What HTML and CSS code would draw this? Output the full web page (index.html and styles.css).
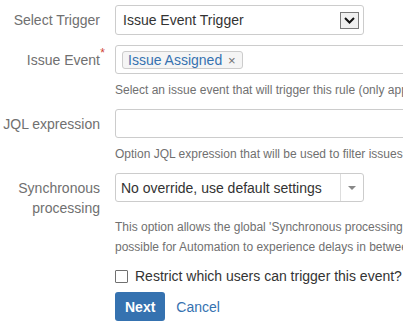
FILE: index.html
```html
<!DOCTYPE html>
<html lang="en">
<head>
  <meta charset="UTF-8">
  <title>Add Trigger</title>
  <link rel="stylesheet" href="styles.css">
</head>
<body>

  <form class="aui">
    <div class="field-group">
      <label>Select Trigger</label>
      <div class="control">
        <div class="select native">
          <span class="value">Issue Event Trigger</span>
          <span class="native-arrow">
            <svg width="11" height="7" viewBox="0 0 11 7"><path d="M1 1 L5.5 5.5 L10 1" fill="none" stroke="#111" stroke-width="2"/></svg>
          </span>
        </div>
      </div>
    </div>

    <div class="field-group">
      <label>Issue Event<span class="required">*</span></label>
      <div class="control">
        <div class="text long tags">
          <span class="tag">Issue Assigned <span class="remove">×</span></span>
        </div>
        <div class="description">Select an issue event that will trigger this rule (only applies to issue events and not to other events)</div>
      </div>
    </div>

    <div class="field-group">
      <label>JQL expression</label>
      <div class="control">
        <div class="text long"></div>
        <div class="description">Option JQL expression that will be used to filter issues before the rule is run</div>
      </div>
    </div>

    <div class="field-group">
      <label>Synchronous processing</label>
      <div class="control">
        <div class="select single">
          <span class="value">No override, use default settings</span>
          <span class="caret"></span>
        </div>
        <div class="description spaced">This option allows the global 'Synchronous processing' setting to be overridden for this rule.<br>possible for Automation to experience delays in between events and rules being processed.</div>
      </div>
    </div>

    <div class="checkbox-row">
      <span class="checkbox"></span>
      <span>Restrict which users can trigger this event?</span>
    </div>

    <div class="buttons">
      <button type="button" class="btn">Next</button>
      <a href="#" class="cancel">Cancel</a>
    </div>
  </form>

</body>
</html>
```

FILE: styles.css
```css
html, body {
  overflow: hidden;
}

body {
  margin: 0;
  padding-top: 5px;
  font-family: 'Liberation Sans', Arial, sans-serif;
  font-size: 14px;
  line-height: 20px;
  color: #333;
  background: #fff;
}

.field-group {
  display: grid;
  grid-template-columns: 100px 1fr;
  column-gap: 15px;
  margin-top: 9px;
}

.field-group:first-child {
  margin-top: 0;
}

.field-group:nth-child(2) {
  margin-top: 10px;
}

.field-group label {
  position: relative;
  text-align: right;
  color: #707070;
  padding-top: 5px;
}

.required {
  position: absolute;
  right: -5px;
  top: 2px;
  color: #d04437;
  font-size: 12px;
  line-height: 12px;
}

.select,
.text {
  box-sizing: border-box;
  border: 1px solid #ccc;
  border-radius: 3px;
  background: #fff;
  height: 29px;
  display: flex;
  align-items: center;
}

.select {
  width: 249px;
}

.select.native {
  height: 30px;
  padding-left: 7px;
  padding-right: 4px;
}

.select .value {
  flex: 1;
  white-space: nowrap;
}

.native-arrow {
  box-sizing: border-box;
  width: 19px;
  height: 17px;
  border: 1px solid #7a7a7a;
  background: #f0f0f0;
  display: flex;
  align-items: center;
  justify-content: center;
}

.select.single {
  padding-left: 5px;
}

.caret {
  align-self: stretch;
  width: 22px;
  border-left: 1px solid #ddd;
  display: flex;
  align-items: center;
  justify-content: center;
}

.caret::after {
  content: '';
  border-left: 4px solid transparent;
  border-right: 4px solid transparent;
  border-top: 4px solid #888;
}

.text.long {
  width: 400px;
}

.tags {
  padding-left: 6px;
}

.tag {
  box-sizing: border-box;
  height: 18px;
  line-height: 16px;
  padding: 0 6px 0 5px;
  border: 1px solid #ccc;
  border-radius: 3px;
  background: #f5f5f5;
  color: #3572b0;
  white-space: nowrap;
}

.tag .remove {
  color: #707070;
  font-size: 13px;
  margin-left: 2px;
}

.description {
  margin-top: 6px;
  font-size: 12px;
  color: #707070;
  white-space: nowrap;
}

.description.spaced {
  margin-top: 15px;
}

.checkbox-row {
  display: flex;
  align-items: center;
  gap: 7px;
  margin: 9px 0 0 115px;
  white-space: nowrap;
}

.checkbox {
  box-sizing: border-box;
  width: 13px;
  height: 13px;
  border: 1px solid #707070;
  border-radius: 1px;
  background: #fff;
}

.buttons {
  display: flex;
  align-items: center;
  gap: 11px;
  margin: 6px 0 0 115px;
}

.btn {
  height: 29px;
  padding: 0 10px;
  border: none;
  border-radius: 3.01px;
  background: #3572b0;
  color: #fff;
  font-family: inherit;
  font-size: 14px;
  font-weight: bold;
}

.cancel {
  color: #3572b0;
  text-decoration: none;
}
```
